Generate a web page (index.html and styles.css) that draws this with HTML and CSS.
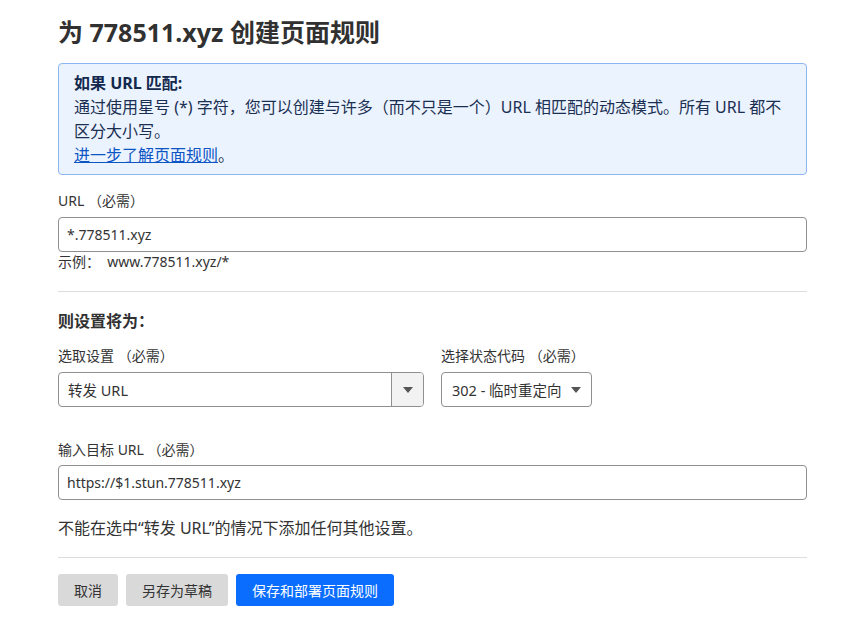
FILE: index.html
```html
<!DOCTYPE html>
<html lang="zh-CN">
<head>
<meta charset="utf-8">
<title>为 778511.xyz 创建页面规则</title>
<link rel="stylesheet" href="styles.css">
</head>
<body>
<div class="page">
  <h1 class="title">为 778511.xyz 创建页面规则</h1>

  <div class="info">
    <div class="info-title">如果 URL 匹配:</div>
    <div class="info-text">通过使用星号 (*) 字符，您可以创建与许多（而不只是一个）URL 相匹配的动态模式。所有 URL 都不区分大小写。</div>
    <div class="info-text"><a class="link" href="#">进一步了解页面规则</a>。</div>
  </div>

  <div class="field">
    <label class="label">URL （必需）</label>
    <div class="input">*.778511.xyz</div>
    <div class="hint">示例：&nbsp; www.778511.xyz/*</div>
  </div>

  <div class="divider"></div>

  <div class="section-title">则设置将为：</div>

  <div class="row">
    <div class="field-col col-setting">
      <label class="label">选取设置 （必需）</label>
      <div class="select">
        <span class="select-value">转发 URL</span>
        <span class="select-btn"><span class="tri"></span></span>
      </div>
    </div>
    <div class="field-col col-status">
      <label class="label">选择状态代码 （必需）</label>
      <div class="select select-small">
        <span class="select-value">302 - 临时重定向</span>
        <span class="tri"></span>
      </div>
    </div>
  </div>

  <div class="field field-target">
    <label class="label">输入目标 URL （必需）</label>
    <div class="input">https://$1.stun.778511.xyz</div>
  </div>

  <p class="note">不能在选中“转发 URL”的情况下添加任何其他设置。</p>

  <div class="divider divider-bottom"></div>

  <div class="actions">
    <button class="btn btn-gray">取消</button>
    <button class="btn btn-gray">另存为草稿</button>
    <button class="btn btn-blue">保存和部署页面规则</button>
  </div>
</div>
</body>
</html>
```

FILE: styles.css
```css
* { box-sizing: border-box; }

html, body {
  margin: 0;
  padding: 0;
  background: #ffffff;
}

body {
  font-family: "Noto Sans", "Noto Sans CJK SC", sans-serif;
  color: #333333;
  font-size: 14px;
}

.page {
  width: 749px;
  margin-left: 58px;
  padding-top: 16px;
}

.title {
  margin: 0;
  font-size: 25px;
  line-height: 32px;
  font-weight: 700;
  color: #313131;
}

.info {
  margin-top: 15px;
  height: 112px;
  padding: 7px 15px;
  background: #ebf3fe;
  border: 1px solid #8cb6f2;
  border-radius: 4px;
  color: #1a2f52;
  font-size: 16px;
  line-height: 24px;
}

.info-title {
  font-weight: 700;
  color: #12284d;
}

.link {
  color: #0b55c4;
  text-decoration: underline;
}

.field { margin-top: 16px; }

.label {
  display: block;
  font-size: 14px;
  line-height: 20px;
  color: #333333;
}

.input {
  margin-top: 6px;
  height: 35px;
  border: 1px solid #8f8f8f;
  border-radius: 4px;
  padding: 0 8px;
  display: flex;
  align-items: center;
  font-size: 14px;
  color: #333333;
}

.hint {
  font-size: 14px;
  line-height: 20px;
  color: #333333;
}

.divider {
  height: 1px;
  background: #dddddd;
  margin-top: 19px;
}

.section-title {
  margin-top: 17px;
  font-size: 16px;
  line-height: 24px;
  font-weight: 700;
  color: #313131;
}

.row {
  display: flex;
  gap: 17px;
  margin-top: 13px;
}

.col-setting { width: 366px; }

.select {
  margin-top: 6px;
  height: 35px;
  border: 1px solid #8f8f8f;
  border-radius: 4px;
  display: flex;
  align-items: center;
  font-size: 14.5px;
  color: #333333;
  overflow: hidden;
}

.select-value {
  flex: 1;
  padding-left: 9px;
}

.select-btn {
  width: 32px;
  height: 100%;
  border-left: 1px solid #8f8f8f;
  background: #f2f2f2;
  display: flex;
  align-items: center;
  justify-content: center;
}

.tri {
  width: 0;
  height: 0;
  border-left: 5px solid transparent;
  border-right: 5px solid transparent;
  border-top: 6px solid #555555;
}

.select-small {
  width: 151px;
  padding-right: 10px;
}

.select-small .select-value { padding-left: 10px; }

.field-target { margin-top: 33px; }

.field-target .input { margin-top: 5px; }

.note {
  margin: 16px 0 0;
  font-size: 16px;
  line-height: 24px;
  color: #333333;
}

.divider-bottom { margin-top: 17px; }

.actions {
  display: flex;
  gap: 8px;
  margin-top: 16px;
}

.btn {
  height: 32px;
  border: none;
  border-radius: 3px;
  padding: 0 16px;
  font-family: "Noto Sans", "Noto Sans CJK SC", sans-serif;
  font-size: 14px;
  cursor: pointer;
}

.btn-gray {
  background: #d9d9d9;
  color: #333333;
}

.btn-blue {
  background: #0a6dfe;
  color: #ffffff;
}
```
